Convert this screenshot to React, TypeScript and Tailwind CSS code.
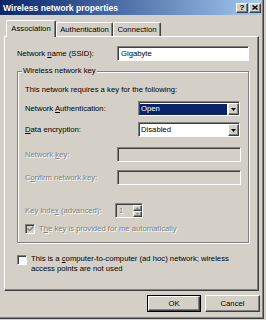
const raised =
  "border border-t-white border-l-white border-r-[#404040] border-b-[#404040] shadow-[inset_-1px_-1px_0_#808080]";
const sunken =
  "border border-t-[#808080] border-l-[#808080] border-r-white border-b-white shadow-[inset_1px_1px_0_#404040]";
const dis = "text-[#808080] [text-shadow:1px_1px_0_#fff]";

function Combo({ value, selected }: { value: string; selected?: boolean }) {
  return (
    <div className={`w-[102px] h-[15px] bg-white flex pt-[1px] pl-[1px] ${sunken}`}>
      <div className="flex-1 flex items-center pr-[1px]">
        <span
          className={`w-full h-[11px] flex items-center pl-[1px] ${
            selected ? "bg-[#0a246a] text-white" : ""
          }`}
        >
          {value}
        </span>
      </div>
      <div className={`w-[11px] h-[12px] bg-[#d4d0c8] flex items-center justify-center ${raised}`}>
        <svg width="5" height="3" viewBox="0 0 5 3">
          <path d="M0 0h5L2.5 3z" fill="#000" />
        </svg>
      </div>
    </div>
  );
}

function CheckBox({ checked, disabled }: { checked?: boolean; disabled?: boolean }) {
  return (
    <div
      className={`w-[10px] h-[10px] shrink-0 flex items-center justify-center ${sunken} ${
        disabled ? "bg-[#d4d0c8]" : "bg-white"
      }`}
    >
      {checked && (
        <svg width="7" height="6" viewBox="0 0 7 6">
          <path d="M0.5 2.5l2 2 4-4" stroke={disabled ? "#808080" : "#000"} strokeWidth="1.4" fill="none" />
        </svg>
      )}
    </div>
  );
}

function Tab({ label, width, active }: { label: string; width: string; active?: boolean }) {
  return (
    <div
      className={`${width} flex justify-center bg-[#d4d0c8] rounded-t-[2px] border-l border-t border-r border-l-white border-t-white border-r-[#404040] shadow-[inset_-1px_0_0_#808080] ${
        active ? "h-[17px] pt-[3px] relative z-10 -mb-[1px]" : "h-[14px] pt-[2px]"
      }`}
    >
      {label}
    </div>
  );
}

export default function App() {
  return (
    <div className="w-[266px] h-[320px] bg-[#d4d0c8] font-['Liberation_Sans',Arial,sans-serif] text-[7.7px] leading-[10px] text-black">
      <div className="w-[264px] h-[319px] border-r border-b border-[#404040] shadow-[inset_-1px_-1px_0_#808080] flex flex-col">
        {/* title bar */}
        <div className="w-[262px] h-[15px] flex items-center pl-[3px] pr-[1px] bg-linear-to-r from-[#0a246a] to-[#a6caf0]">
          <span className="flex-1 font-bold text-[8.6px] text-white whitespace-nowrap">
            Wireless network properties
          </span>
          <div className="flex gap-[1px]">
            <div className={`w-[12px] h-[10px] bg-[#d4d0c8] flex items-center justify-center font-bold text-[8px] leading-none ${raised}`}>
              ?
            </div>
            <div className={`w-[12px] h-[10px] bg-[#d4d0c8] flex items-center justify-center ${raised}`}>
              <svg width="6" height="5" viewBox="0 0 6 5">
                <path d="M0.5 0.5l5 4M5.5 0.5l-5 4" stroke="#000" strokeWidth="1.4" />
              </svg>
            </div>
          </div>
        </div>

        {/* tabs */}
        <div className="mt-[5px] pl-[6px] h-[16px] flex items-end">
          <Tab label="Association" width="w-[50px]" active />
          <Tab label="Authentication" width="w-[57px]" />
          <Tab label="Connection" width="w-[48px]" />
        </div>

        {/* panel */}
        <div className={`ml-[4px] w-[255px] h-[255px] pl-[12px] pt-[9px] ${raised}`}>
          <div className="flex items-center h-[15px]">
            <span className="w-[100px]">
              Network <span className="underline">n</span>ame (SSID):
            </span>
            <div className={`w-[132px] h-[15px] bg-white flex items-center pl-[3px] ${sunken}`}>
              Gigabyte
            </div>
          </div>

          <div className="relative mt-[10px] w-[232px] border border-[#808080] shadow-[inset_1px_1px_0_#fff,1px_1px_0_#fff] pl-[7px] pt-[13px] pb-[8px]">
            <span className="absolute left-[4px] -top-[6px] px-[1px] bg-[#d4d0c8]">
              Wireless network key
            </span>
            <div className="h-[10px]">This network requires a key for the following:</div>

            <div className="mt-[6px] flex items-center h-[15px]">
              <span className="w-[113px]">
                Network <span className="underline">A</span>uthentication:
              </span>
              <Combo value="Open" selected />
            </div>
            <div className="mt-[6px] flex items-center h-[15px]">
              <span className="w-[113px]">
                <span className="underline">D</span>ata encryption:
              </span>
              <Combo value="Disabled" />
            </div>

            <div className="mt-[10px] flex items-center h-[15px]">
              <span className={`w-[92px] ${dis}`}>
                Network <span className="underline">k</span>ey:
              </span>
              <div className={`w-[124px] h-[15px] bg-[#d4d0c8] ${sunken}`} />
            </div>
            <div className="mt-[8px] flex items-center h-[15px]">
              <span className={`w-[92px] ${dis}`}>
                C<span className="underline">o</span>nfirm network key:
              </span>
              <div className={`w-[124px] h-[15px] bg-[#d4d0c8] ${sunken}`} />
            </div>

            <div className="mt-[18px] flex items-center h-[15px]">
              <span className={`w-[90px] ${dis}`}>
                Key inde<span className="underline">x</span> (advanced):
              </span>
              <div className={`w-[28px] h-[15px] bg-[#d4d0c8] flex pt-[1px] pl-[1px] ${sunken}`}>
                <span className={`flex-1 pl-[2px] leading-[12px] ${dis}`}>1</span>
                <div className="w-[9px] flex flex-col">
                  <div className={`h-[6px] bg-[#d4d0c8] flex items-center justify-center ${raised}`}>
                    <svg width="3" height="2" viewBox="0 0 3 2">
                      <path d="M0 2h3L1.5 0z" fill="#808080" />
                    </svg>
                  </div>
                  <div className={`h-[6px] bg-[#d4d0c8] flex items-center justify-center ${raised}`}>
                    <svg width="3" height="2" viewBox="0 0 3 2">
                      <path d="M0 0h3L1.5 2z" fill="#808080" />
                    </svg>
                  </div>
                </div>
              </div>
            </div>

            <div className="mt-[6px] flex items-center h-[10px] gap-[4px]">
              <CheckBox checked disabled />
              <span className={dis}>
                T<span className="underline">h</span>e key is provided for me automatically
              </span>
            </div>
          </div>

          <div className="mt-[11px] flex items-start gap-[4px]">
            <div className="mt-[1px]">
              <CheckBox />
            </div>
            <span className="whitespace-nowrap">
              This is a <span className="underline">c</span>omputer-to-computer (ad hoc) network; wireless
              <br />
              access points are not used
            </span>
          </div>
        </div>

        {/* buttons */}
        <div className="mt-[4px] flex justify-end gap-[4px] pr-[3px]">
          <div className="w-[54px] h-[17px] border border-black">
            <div className={`w-full h-full bg-[#d4d0c8] flex items-center justify-center ${raised}`}>OK</div>
          </div>
          <div className={`w-[55px] h-[17px] bg-[#d4d0c8] flex items-center justify-center ${raised}`}>
            Cancel
          </div>
        </div>
      </div>
    </div>
  );
}
